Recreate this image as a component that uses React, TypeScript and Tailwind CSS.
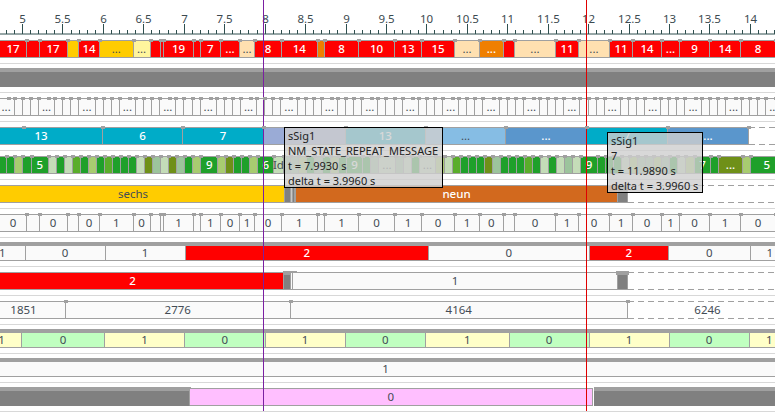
import type { ReactNode } from 'react'
import { twMerge } from 'tailwind-merge'

type Seg = { end: number; cls: string; text?: string; inner?: number; children?: ReactNode }

const s = (end: number, cls: string, text?: string, inner?: number): Seg => ({ end, cls, text, inner })

// cell colours
const RED = 'bg-[#ff0000] text-white font-medium'
const GOLD = 'bg-[#ffcc00]'
const LEMON = 'bg-[#fff59d]'
const PEACH = 'bg-[#ffe0b0]'
const ORANGE = 'bg-[#ef7f00] text-white font-medium'
const PLAIN = 'bg-[#fafafa]'
const TEAL = 'bg-[#00acc8] text-white font-medium'
const PERI = 'bg-[#9aabd6]'
const SKY = 'bg-[#86bde4]'
const BLUE = 'bg-[#5a96cc] text-white font-medium'
const DARK = 'bg-[#1fa02a] text-white font-medium'
const LIGHT = 'bg-[#a8cc70]'
const PALE = 'bg-[#c4dcb8]'
const MID = 'bg-[#5aad2a]'
const OLIVE = 'bg-[#6f9018] text-white font-medium'
const MUTED = 'bg-[#9cc49c]'
const GRAY = 'bg-[#808080]'
const YELLOW = 'bg-[#ffffc8]'
const MINT = 'bg-[#c0ffc0]'
const PINK = 'bg-[#ffbfff]'
const BAND = '-mt-px h-[19px] border-t-4'
const DASHED =
  'border-0 bg-[linear-gradient(90deg,#a0a0a0_6px,transparent_6px),linear-gradient(90deg,#a0a0a0_6px,transparent_6px)] bg-[length:10px_1px] bg-[position:0_0,0_100%] bg-repeat-x'

const row1: Seg[] = [
  s(27, RED, '17'), s(39.5, RED), s(67.5, RED, '17'), s(79, GOLD), s(100, RED, '14'), s(133.5, GOLD, '...'),
  s(150.5, LEMON, '...'), s(160.5, RED), s(164, RED), s(194, RED, '19'), s(200.5, RED), s(221, RED, '7'),
  s(240, RED, '...'), s(255, PEACH, '...'), s(282, RED, '8'), s(317.5, RED, '14'), s(325, ORANGE), s(359, RED, '8'),
  s(395, RED, '10'), s(422, RED, '13'), s(455, RED, '15'), s(480, PEACH, '...'), s(503.7, ORANGE, '...'), s(515, RED),
  s(556, PEACH, '...'), s(579, RED, '11'), s(610, PEACH, '...'), s(633, RED, '11'), s(662, RED, '14'),
  s(680, RED, '...'), s(710, RED, '9'), s(741, RED, '14'), s(776, RED, '8'),
]

// repeating group: one wide "..." cell then three narrow ones
const PERIOD = 40.44
const row3: Seg[] = Array.from({ length: 20 }).flatMap((_, k) => {
  const b = -1.44 + PERIOD * k
  return [
    s(b + 16.18, PLAIN, '...', 8.09),
    s(b + 24.27, PLAIN),
    s(b + 32.36, PLAIN),
    s(b + PERIOD, PLAIN),
  ]
})

const row4: Seg[] = [
  s(103, TEAL, '13', 42), s(183, TEAL, '6'), s(264, TEAL, '7'), s(345.5, PERI), s(426, TEAL, '13'), s(506, SKY, '...'),
  s(587, BLUE, '...'), s(668, TEAL, '7'), s(749, BLUE, '...'), s(787, twMerge(DASHED, 'text-white'), '6'),
]

const row5: Seg[] = [
  s(7.3, DARK), s(15.4, DARK), s(23.5, LIGHT), s(32, DARK), s(48.7, DARK, '5'), s(56.7, PALE), s(64.7, DARK),
  s(72.7, PALE), s(80.7, MID), s(88.7, DARK), s(96.7, LIGHT), s(104.7, DARK), s(112.7, MID), s(120.7, DARK),
  s(128.7, DARK), s(137, DARK), s(145.3, PALE), s(153.3, OLIVE), s(161.3, MUTED), s(169.3, PALE), s(177.3, OLIVE),
  s(185.3, MUTED), s(193.3, DARK), s(201.5, LIGHT), s(218, DARK, '9'), s(226, LIGHT), s(234, OLIVE), s(242, DARK),
  s(250.5, DARK), s(258.5, LIGHT), s(274, DARK, '6'), s(284, PALE, 'Id'), s(291, MUTED), s(299, MUTED), s(307, LIGHT),
  s(315, DARK), s(323, MUTED), s(331, DARK), s(339, LIGHT), s(347, DARK), s(363, DARK, '9'), s(371, DARK), s(379, MUTED),
  s(396, PALE, '...'), s(404, MUTED), s(412, PALE), s(420, DARK), s(436, PALE, '...'), s(445, LIGHT), s(453, PALE),
  s(461, MID), s(469, DARK), s(477, DARK), s(485, DARK), s(493, OLIVE), s(501, MUTED), s(509, DARK), s(517, DARK),
  s(525, DARK), s(533, MID), s(541, DARK), s(549, PALE), s(557, DARK), s(565, PALE), s(573, MUTED), s(581, PALE),
  s(598, DARK, '9'), s(606, DARK), s(614, DARK), s(622, DARK), s(630, PALE), s(638, LIGHT), s(646, MUTED),
  s(654, MUTED), s(662, LIGHT), s(670, MUTED), s(678, DARK), s(686, PALE), s(695, LIGHT), s(711, DARK, '7'),
  s(719, DARK), s(743, OLIVE, '...'), s(751.5, LIGHT), s(783, DARK, '5'),
]

const row6: Seg[] = [
  s(285, GOLD, 'sechs'), s(291, GRAY), s(292.5, 'bg-[#c8c8c8]'), s(295, GRAY), s(296, 'bg-white'),
  s(618, 'bg-[#d2691e] text-white font-medium', 'neun'), s(628, GRAY), s(790, DASHED),
]

const row7: Seg[] = [
  s(27, PLAIN, '0'), s(39.5, PLAIN), s(67.5, PLAIN, '0'), s(79, PLAIN), s(100, PLAIN, '0'), s(133.5, PLAIN, '1'),
  s(150.5, PLAIN, '0'), s(160.5, PLAIN), s(164, PLAIN), s(194, PLAIN, '1'), s(200.5, PLAIN), s(221, PLAIN, '1'),
  s(240, PLAIN, '0'), s(255, PLAIN, '1'), s(282, PLAIN, '0'), s(317.5, PLAIN, '1'), s(325, PLAIN), s(359, PLAIN, '1'),
  s(395, PLAIN, '0'), s(422, PLAIN, '1'), s(455, PLAIN, '0'), s(480, PLAIN, '1'), s(503.7, PLAIN, '0'), s(515, PLAIN),
  s(556, PLAIN, '0'), s(579, PLAIN, '1'), s(610, PLAIN, '0'), s(633, PLAIN, '1'), s(662, PLAIN, '0'),
  s(680, PLAIN, '1'), s(710, PLAIN, '0'), s(741, PLAIN, '1'), s(776, PLAIN, '0'),
]

const row8: Seg[] = [
  s(25.5, PLAIN, '1'), s(105.5, PLAIN, '0'), s(185.7, PLAIN, '1'), s(429, RED, '2'), s(589.7, PLAIN, '0'),
  s(669, RED, '2'), s(750.7, PLAIN, '0'), s(790, PLAIN, '1'),
].map((seg) => ({ ...seg, cls: twMerge(seg.cls, BAND) }))

const CAP = 'absolute -top-[2px] h-[4px] bg-[#a0a0a0]'

const row9: Seg[] = [
  s(284, RED, '2'),
  { end: 291, cls: GRAY, children: <span className={twMerge(CAP, '-left-px w-[14px]')} /> },
  s(293, PLAIN),
  s(618, PLAIN, '1'),
  { end: 628, cls: GRAY, children: <span className={twMerge(CAP, '-left-[2px] w-[13px]')} /> },
  s(790, DASHED),
]

const row10: Seg[] = [
  s(66, PLAIN, '1851'), s(290.5, PLAIN, '2776'), s(628, PLAIN, '4164'), s(787, DASHED, '6246'),
]

const row11: Seg[] = [
  s(22, YELLOW, '1'), s(105, MINT, '0'), s(185, YELLOW, '1'), s(265.5, MINT, '0'), s(345.5, YELLOW, '1'),
  s(426, MINT, '0'), s(509.5, YELLOW, '1'), s(589.5, MINT, '0'), s(669.5, YELLOW, '1'), s(749.7, MINT, '0'),
  s(790, YELLOW, '1'),
].map((seg) => ({ ...seg, cls: twMerge(seg.cls, BAND) }))

const row13: Seg[] = [
  {
    end: 189.5,
    cls: twMerge(GRAY, BAND, 'border-b-[#808080]'),
    children: <span className="absolute -top-[4px] -right-[2px] h-[4px] w-[2px] bg-[#a0a0a0]" />,
  },
  s(593, PINK, '0'),
  { end: 594, cls: 'border-0 bg-white' },
  { end: 776, cls: twMerge(GRAY, BAND, 'border-b-[#808080] border-r-0') },
]

function Track({ segs, start = 0, marks = false }: { segs: Seg[]; start?: number; marks?: boolean }) {
  let prev = start
  return (
    <div className="flex h-[18px] items-start" style={{ marginLeft: start }}>
      {segs.map((seg, i) => {
        const width = seg.end - prev
        prev = seg.end
        return (
          <div
            key={i}
            className={twMerge(
              'relative flex h-[18px] shrink-0 items-center justify-center border-t border-r border-b border-[#a0a0a0] leading-none',
              seg.cls,
            )}
            style={{ width }}
          >
            {seg.text}
            {seg.children}
            {marks && (
              <span className="absolute -top-[2px] -right-[3px] z-10 h-[3px] w-[4px] bg-[#a0a0a0]" />
            )}
            {marks && seg.inner !== undefined && (
              <span
                className="absolute -top-[2px] z-10 h-[3px] w-[4px] bg-[#a0a0a0]"
                style={{ left: seg.inner }}
              />
            )}
          </div>
        )
      })}
    </div>
  )
}

function Row({ children }: { children: ReactNode }) {
  return (
    <div className="h-[29px]">
      {children}
      <div className="mt-[5px] h-px bg-[#d8d8d8]" />
    </div>
  )
}

function Axis() {
  const ticks = Array.from({ length: 97 }, (_, i) => i - 2)
  return (
    <svg width={775} height={40} className="block">
      <line x1={0} x2={775} y1={34} y2={34} stroke="#2f4f4f" />
      {ticks.map((i) => {
        const x = Math.round(22 + 8.088 * i) + 0.5
        const major = i % 5 === 0
        return (
          <g key={i}>
            <line x1={x} x2={x} y1={major ? 24 : 30} y2={34} stroke="#2f4f4f" />
            {major && (
              <text x={x} y={23} textAnchor="middle" fontSize={11.5} fill="#3c4a50">
                {5 + i / 10}
              </text>
            )}
          </g>
        )
      })}
    </svg>
  )
}

function Tip({ className, lines }: { className: string; lines: string[] }) {
  return (
    <div
      className={twMerge(
        'absolute z-20 border border-black bg-[#cecece]/80 px-[3px] text-[11px] leading-[15px] whitespace-nowrap text-[#222]',
        className,
      )}
    >
      {lines.map((l) => (
        <div key={l}>{l}</div>
      ))}
    </div>
  )
}

export default function App() {
  return (
    <div className="relative h-[415px] w-[775px] overflow-hidden bg-white font-['Noto_Sans',sans-serif] text-[11.5px] text-[#444c55]">
      <Axis />
      <Row><Track segs={row1} marks /></Row>
      <Row><Track segs={[s(776, twMerge(GRAY, BAND, 'border-b-[#808080]'))]} /></Row>
      <Row><Track segs={row3} marks start={-1.44} /></Row>
      <Row><Track segs={row4} marks start={-20} /></Row>
      <Row><Track segs={row5} marks /></Row>
      <Row><Track segs={row6} start={-18} /></Row>
      <Row><Track segs={row7} marks /></Row>
      <Row><Track segs={row8} start={-20} /></Row>
      <Row><Track segs={row9} start={-18} /></Row>
      <Row><Track segs={row10} marks start={-18} /></Row>
      <Row><Track segs={row11} start={-18} /></Row>
      <Row><Track segs={[s(776, twMerge(PLAIN, BAND), '1')]} start={-4} /></Row>
      <Row><Track segs={row13} /></Row>

      {/* cursors and their tooltips */}
      <div className="absolute top-0 left-[263px] h-[411px] w-px bg-[#7b1fa2]" />
      <div className="absolute top-0 left-[586px] h-[411px] w-px bg-[#e00000]" />
      <Tip
        className="top-[127px] left-[284px] h-[61px] w-[159px]"
        lines={['sSig1', 'NM_STATE_REPEAT_MESSAGE', 't = 7.9930 s', 'delta t = 3.9960 s']}
      />
      <Tip
        className="top-[132px] left-[607px] h-[61px] w-[96px]"
        lines={['sSig1', '7', 't = 11.9890 s', 'delta t = 3.9960 s']}
      />
    </div>
  )
}
